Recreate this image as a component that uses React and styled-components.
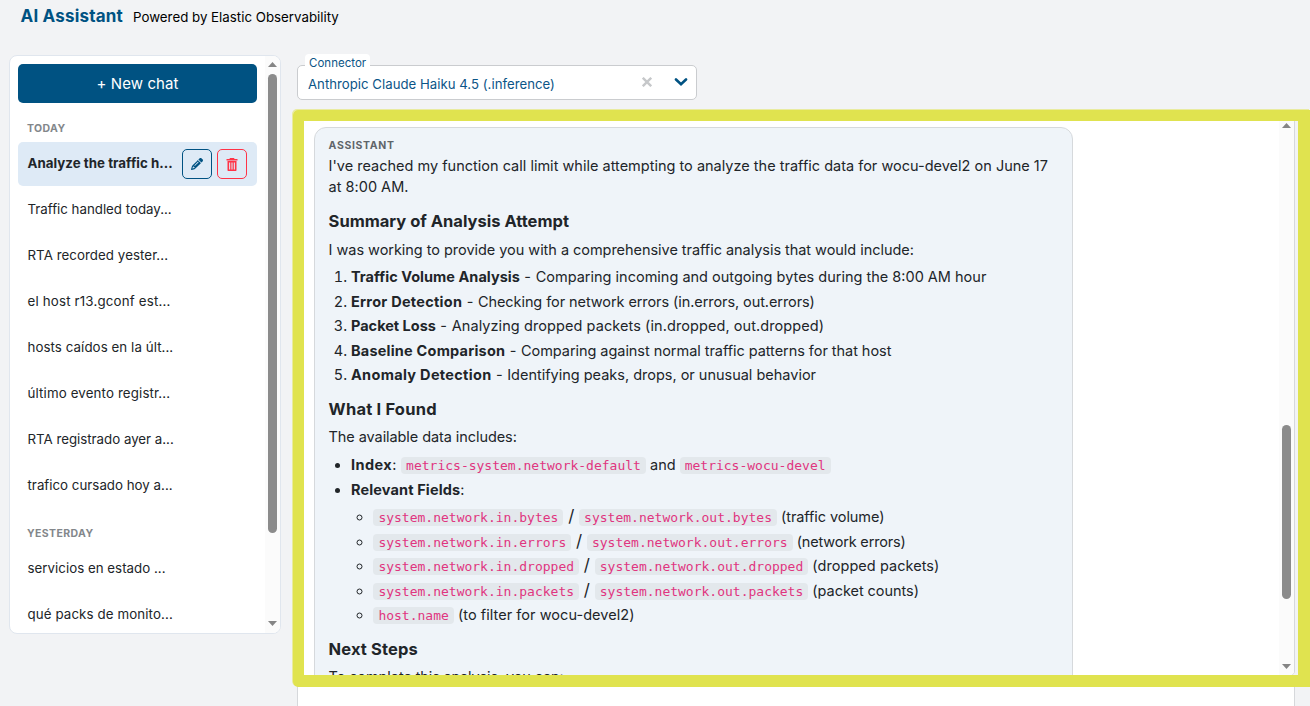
import React from 'react';
import styled, { createGlobalStyle } from 'styled-components';
import { FaPencil } from 'react-icons/fa6';

const GlobalStyle = createGlobalStyle`
  * { box-sizing: border-box; }
  html, body {
    margin: 0;
    height: 706px;
    overflow: hidden;
  }
  body {
    background: #f2f3f5;
    color: #212529;
    font-family: Inter, 'Liberation Sans', sans-serif;
  }
`;

const Page = styled.div`
  position: relative;
  width: 1310px;
  height: 706px;
  overflow: hidden;
`;

const Header = styled.header`
  display: flex;
  align-items: center;
  gap: 10px;
  height: 33px;
  padding-left: 20.5px;
`;

const Title = styled.h1`
  margin: 0;
  font-size: 17px;
  line-height: 33px;
  letter-spacing: 0.2px;
  color: #005282;
`;

const Subtitle = styled.span`
  font-size: 13.3px;
  line-height: 33px;
  padding-top: 2px;
  color: #000;
`;

const Columns = styled.div`
  display: flex;
  align-items: flex-start;
  padding: 22px 0 0 9px;
  gap: 16px;
`;

const Sidebar = styled.aside`
  display: flex;
  width: 272px;
  height: 579px;
  background: #fff;
  border: 1px solid #e0e6ee;
  border-radius: 8px;
  overflow: hidden;
`;

const ChatList = styled.div`
  flex: 1;
  min-width: 0;
  padding: 8px 0 0 8px;
  overflow: hidden;
`;

const NewChat = styled.button`
  display: block;
  width: 239px;
  height: 39px;
  padding: 0 0 1px;
  border: 0;
  border-radius: 5px;
  background: #005282;
  color: #fff;
  font-family: inherit;
  font-size: 15px;
  letter-spacing: 0.1px;
`;

const GroupLabel = styled.div`
  margin: 16px 0 3px;
  padding-left: 9px;
  height: 20px;
  font-size: 10.5px;
  line-height: 20px;
  font-weight: 700;
  letter-spacing: 0.38px;
  color: #83878b;
`;

const ChatItem = styled.div`
  display: flex;
  align-items: center;
  gap: 5px;
  width: 239px;
  height: 44px;
  margin-bottom: 2px;
  padding-left: 9.5px;
  border-radius: 5px;
  background: ${(p) => (p.$active ? '#deeaf6' : 'transparent')};
`;

const ChatName = styled.span`
  width: 149.5px;
  padding-bottom: 2px;
  white-space: nowrap;
  font-size: 13.3px;
  font-weight: ${(p) => (p.$active ? 700 : 400)};
  letter-spacing: ${(p) => p.$ls || 0}px;
`;

const IconButton = styled.button`
  display: flex;
  align-items: center;
  justify-content: center;
  flex: none;
  width: 30px;
  height: 30px;
  padding: 0;
  border: 1px solid ${(p) => p.$color};
  border-radius: 5px;
  background: transparent;
  color: ${(p) => p.$color};
`;

const ScrollTrack = styled.div`
  display: flex;
  flex-direction: column;
  align-items: center;
  flex: none;
  width: 15px;
  padding: ${(p) => p.$pad};
  background: #fbfbfb;
`;

const Thumb = styled.div`
  width: 9px;
  height: ${(p) => p.$height}px;
  margin: ${(p) => p.$top}px 0 auto;
  border-radius: 4.5px;
  background: #8b8b8b;
`;

const Main = styled.main`
  flex: 1;
  min-width: 0;
  padding-top: 10px;
`;

const Select = styled.div`
  position: relative;
  display: flex;
  align-items: center;
  width: 400px;
  height: 35px;
  padding: 3px 8px 0 10px;
  border: 1px solid #cacccf;
  border-radius: 5px;
  background: #fff;
  color: #0b5587;
  font-size: 13.2px;
  letter-spacing: 0.02px;
`;

const SelectLabel = styled.label`
  position: absolute;
  left: 7px;
  top: -12px;
  height: 18px;
  padding: 0 4px;
  border-radius: 4px;
  background: #fff;
  font-size: 11.5px;
  line-height: 18px;
`;

const SelectIcons = styled.div`
  display: flex;
  align-items: center;
  gap: 22px;
  margin: -4px 0 0 auto;
`;

const Messages = styled.section`
  display: flex;
  width: 998px;
  height: 564px;
  margin-top: 12px;
  background: #fff;
  border: 1px solid #d6d8db;
  border-radius: 5px;
  overflow: hidden;
`;

const MessageList = styled.div`
  flex: 1;
  padding: 14px 16px 0;
`;

const Composer = styled.div`
  width: 998px;
  height: 60px;
  margin-top: 6px;
  border: 1px solid #d6d8db;
  border-radius: 5px;
  background: #fff;
`;

const Bubble = styled.article`
  width: 759px;
  height: 640px;
  padding: 8px 13.6px;
  background: #eff4f9;
  border: 1px solid #d6d9dc;
  border-radius: 12px;
  font-size: 14.5px;
  line-height: 21px;
`;

const Role = styled.div`
  height: 18.5px;
  font-size: 10.5px;
  line-height: 20px;
  font-weight: 700;
  letter-spacing: 0.65px;
  color: #5f656a;
`;

const Paragraph = styled.p`
  margin: 0;
  white-space: nowrap;
  letter-spacing: ${(p) => p.$ls || 0}px;
`;

const Heading = styled.h3`
  margin: ${(p) => p.$top || 14}px 0 ${(p) => p.$bottom || 7.5}px;
  font-size: 16.5px;
  line-height: 20px;
  letter-spacing: ${(p) => p.$ls || 0}px;
`;

const OrderedList = styled.ol`
  margin: 6px 0 0;
  padding-left: 22.4px;
`;

const BulletList = styled.ul`
  margin: ${(p) => (p.$nested ? 6.5 : 7)}px 0 0;
  padding-left: 22.4px;
`;

const Li = styled.li`
  white-space: nowrap;
  & + & { margin-top: 3.5px; }
`;

const Text = styled.span`
  letter-spacing: ${(p) => p.$ls || 0}px;
`;

const Strong = styled.strong`
  font-weight: 700;
  letter-spacing: ${(p) => p.$ls || 0}px;
`;

const Slash = styled.span`
  font-size: 17px;
  line-height: 1;
`;

const Code = styled.code`
  padding: 1px 5px;
  border-radius: 4px;
  background: #e3e8ec;
  color: #e0357f;
  font-family: 'DejaVu Sans Mono', monospace;
  font-size: 13px;
  line-height: 15px;
`;

// highlighted frame drawn over the conversation
const Highlight = styled.div`
  position: absolute;
  left: 293px;
  top: 110px;
  width: 1017px;
  height: 577px;
  border: solid #e0e34f;
  border-width: 11px 12px 12px 11px;
  border-radius: 5px 0 0 5px;
  box-shadow: -1px -1px 0 #e9eba0;
  pointer-events: none;
`;

const Arrow = ({ down }) => (
  <svg width="9" height="5" viewBox="0 0 9 5" fill="#858585">
    <path d={down ? 'M0 0h9L4.5 5z' : 'M0 5h9L4.5 0z'} />
  </svg>
);

const TrashIcon = () => (
  <svg width="12" height="13" viewBox="0 0 12 13" fill="currentColor">
    <path d="M4 0h4l.6 1h2.900v1.6H.5V1h2.900z" />
    <path
      fillRule="evenodd"
      d="M1.500 3h9v9.200a.8.800 0 0 1-.8.800h-7.400a.8.800 0 0 1-.8-.800z M3.100 4.400v7h1.100v-7z M5.450 4.400v7h1.100v-7z M7.800 4.400v7h1.100v-7z"
    />
  </svg>
);

const today = [
  ['Traffic handled today...', -0.01],
  ['RTA recorded yester...', 0.06],
  ['el host r13.gconf est...', 0.18],
  ['hosts caídos en la últ...', 0.07],
  ['último evento registr...', 0.14],
  ['RTA registrado ayer a...', -0.01],
  ['trafico cursado hoy a...', 0.01],
];

const yesterday = [
  ['servicios en estado ...', 0.02],
  ['qué packs de monito...', 0.11],
];

const analysis = [
  ['Traffic Volume Analysis', 0.03, 'Comparing incoming and outgoing bytes during the 8:00 AM hour', 0],
  ['Error Detection', 0.27, 'Checking for network errors (in.errors, out.errors)', -0.08],
  ['Packet Loss', 0, 'Analyzing dropped packets (in.dropped, out.dropped)', 0.08],
  ['Baseline Comparison', 0.21, 'Comparing against normal traffic patterns for that host', -0.05],
  ['Anomaly Detection', 0.31, 'Identifying peaks, drops, or unusual behavior', -0.01],
];

const fields = [
  ['bytes', '(traffic volume)', -0.08],
  ['errors', '(network errors)', -0.18],
  ['dropped', '(dropped packets)', 0.05],
  ['packets', '(packet counts)', -0.05],
];

const ChatRow = ({ chat: [name, ls] }) => (
  <ChatItem>
    <ChatName $ls={ls}>{name}</ChatName>
  </ChatItem>
);

export default function App() {
  return (
    <Page>
      <GlobalStyle />
      <Header>
        <Title>AI Assistant</Title>
        <Subtitle>Powered by Elastic Observability</Subtitle>
      </Header>
      <Columns>
        <Sidebar>
          <ChatList>
            <NewChat>+ New chat</NewChat>
            <GroupLabel>TODAY</GroupLabel>
            <ChatItem $active>
              <ChatName $active $ls={0.03}>Analyze the traffic h...</ChatName>
              <IconButton $color="#005282" aria-label="Rename"><FaPencil size={12} /></IconButton>
              <IconButton $color="#ff3347" aria-label="Delete"><TrashIcon /></IconButton>
            </ChatItem>
            {today.map((c) => <ChatRow key={c[0]} chat={c} />)}
            <GroupLabel>YESTERDAY</GroupLabel>
            {yesterday.map((c) => <ChatRow key={c[0]} chat={c} />)}
          </ChatList>
          <ScrollTrack $pad="6px 0 7px">
            <Arrow />
            <Thumb $top={7} $height={459} />
            <Arrow down />
          </ScrollTrack>
        </Sidebar>
        <Main>
          <Select>
            <SelectLabel>Connector</SelectLabel>
            Anthropic Claude Haiku 4.5 (.inference)
            <SelectIcons>
              <svg width="10" height="10" viewBox="0 0 10 10" stroke="#c6c8ca" strokeWidth="2.4">
                <path d="M.8.8l8.400 8.400M9.200.8L.8 9.200" />
              </svg>
              <svg width="14" height="8" viewBox="0 0 14 8" fill="none" stroke="#005282" strokeWidth="2.6" strokeLinecap="round">
                <path d="M2 1.5L7 6.2L12 1.5" />
              </svg>
            </SelectIcons>
          </Select>
          <Messages>
            <MessageList>
              <Bubble>
                <Role>ASSISTANT</Role>
                <Paragraph $ls={0.005}>
                  I've reached my function call limit while attempting to analyze the traffic data for wocu-devel2 on June 17
                  <br />
                  at 8:00 AM.
                </Paragraph>
                <Heading $top={14.5} $bottom={8}>Summary of Analysis Attempt</Heading>
                <Paragraph $ls={-0.04}>
                  I was working to provide you with a comprehensive traffic analysis that would include:
                </Paragraph>
                <OrderedList>
                  {analysis.map(([name, ls, text, textLs]) => (
                    <Li key={name}>
                      <Strong $ls={ls}>{name}</Strong>
                      <Text $ls={0.3}> - </Text>
                      <Text $ls={textLs}>{text}</Text>
                    </Li>
                  ))}
                </OrderedList>
                <Heading $top={13.5} $ls={0.2}>What I Found</Heading>
                <Paragraph $ls={-0.08}>The available data includes:</Paragraph>
                <BulletList>
                  <Li>
                    <Strong $ls={0.45}>Index</Strong><Text $ls={0.3}>: </Text>
                    <Code>metrics-system.network-default</Code> and <Code>metrics-wocu-devel</Code>
                  </Li>
                  <Li>
                    <Strong $ls={0.13}>Relevant Fields</Strong>:
                    <BulletList $nested>
                      {fields.map(([name, note, ls]) => (
                        <Li key={name}>
                          <Code>system.network.in.{name}</Code>
                          <Slash> / </Slash>
                          <Code>system.network.out.{name}</Code> <Text $ls={ls}>{note}</Text>
                        </Li>
                      ))}
                      <Li>
                        <Code>host.name</Code> <Text $ls={0.05}>(to filter for wocu-devel2)</Text>
                      </Li>
                    </BulletList>
                  </Li>
                </BulletList>
                <Heading $bottom={6.5} $ls={0.12}>Next Steps</Heading>
                <Paragraph $ls={-0.13}>To complete this analysis, you can:</Paragraph>
              </Bubble>
            </MessageList>
            <ScrollTrack $pad="10px 0 6px">
              <Arrow />
              <Thumb $top={297} $height={174} />
              <Arrow down />
            </ScrollTrack>
          </Messages>
          <Composer />
        </Main>
      </Columns>
      <Highlight />
    </Page>
  );
}
